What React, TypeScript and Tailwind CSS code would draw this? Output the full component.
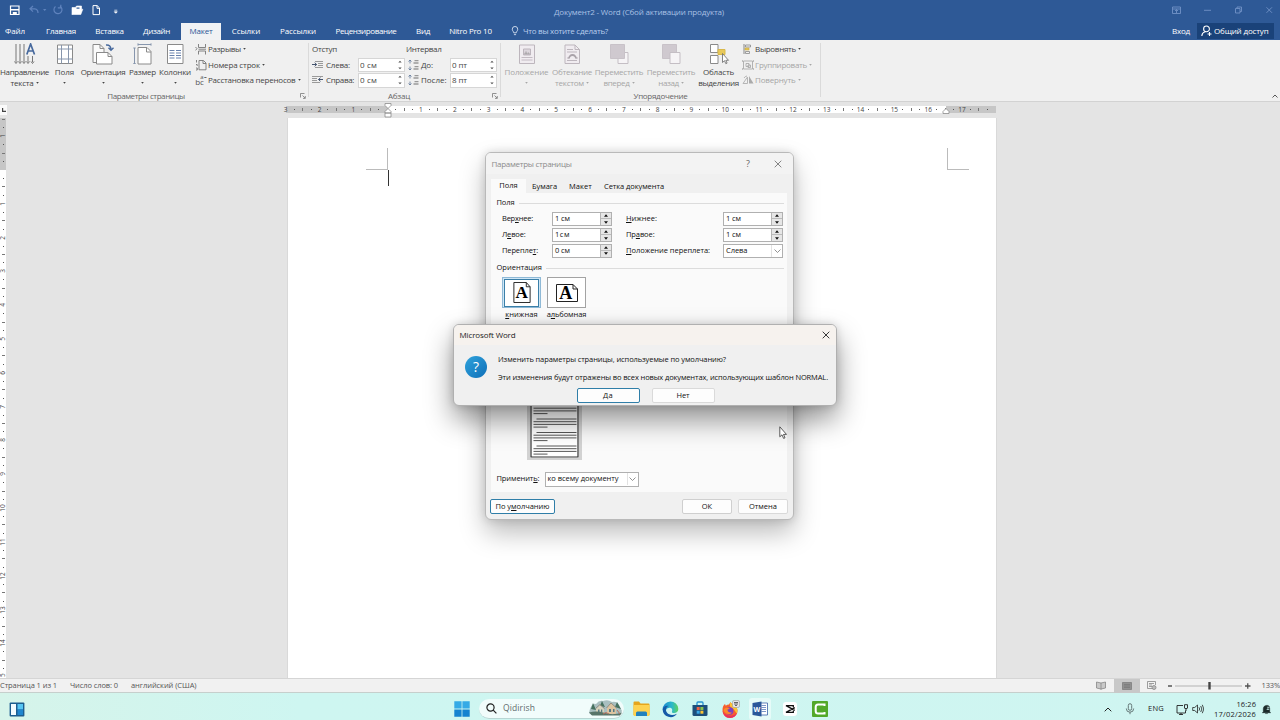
import { useLayoutEffect, useRef, useState } from "react";
import type { ReactNode } from "react";

/* Single-line label whose letter spacing is adjusted to fill a given width. */
function Fit({ w, children, className = "" }: { w: number; children: ReactNode; className?: string }) {
  const ref = useRef<HTMLSpanElement>(null);
  const [spacing, setSpacing] = useState(0);
  useLayoutEffect(() => {
    const el = ref.current;
    if (!el) return;
    el.style.letterSpacing = "0px";
    const n = (el.textContent ?? "").length || 1;
    const s = (w - el.getBoundingClientRect().width) / n;
    el.style.letterSpacing = `${s}px`;
    setSpacing(s);
  }, [w]);
  return (
    <span ref={ref} className={`inline-block shrink-0 whitespace-nowrap ${className}`} style={{ letterSpacing: `${spacing}px` }}>
      {children}
    </span>
  );
}

function Caret({ className = "" }: { className?: string }) {
  return (
    <svg viewBox="0 0 4 3" className={`h-[2px] w-[3px] shrink-0 fill-current ${className}`}>
      <path d="M0 0h4L2 2.6z" />
    </svg>
  );
}

function Launcher() {
  return (
    <svg viewBox="0 0 6 6" className="h-[6px] w-[6px] fill-none stroke-[#777]" strokeWidth=".8">
      <path d="M.5 4.5v-4h4M2.5 2.5l2.6 2.6M5.3 3v2.4H3" />
    </svg>
  );
}

/* ---------- title bar and tabs ---------- */

function TitleBar() {
  return (
    <div className="flex h-[23px] items-center text-[#dbe6f6]">
      <svg viewBox="0 0 120 23" className="h-[23px] w-[120px] shrink-0 fill-none">
        <path d="M10.500 6h8.500v8.500h-8.500z" stroke="#fff" strokeWidth="1.200" />
        <path d="M10.500 9h8.500v1.600h-8.500zM12.800 12h4v2.500h-4z" fill="#fff" />
        <g stroke="#5f83bd" strokeWidth="1.200">
          <path d="M33 6l-3 2.800 3 2.800M30.300 8.800h4.500q3.200.4 3.200 4.200" />
          <path d="M55.500 6.500a4 4 0 1 0 4.500-.3M60.800 4.800v3h-3" />
        </g>
        <path d="M43 9h3.400l-1.700 2z" fill="#5f83bd" />
        <path d="M72 14.500v-7h3.500l1-1.500h5v3M72 14.500l2.300-5.300h8.500l-2 5.300z" fill="#fff" stroke="#fff" strokeWidth=".6" />
        <path d="M76.500 7.500h3v1.200h-3z" fill="#2b5797" />
        <path d="M93 5.600h4.200l2.300 2.300v6.700H93zM97 5.800v2.500h2.500" stroke="#fff" strokeWidth="1" />
        <path d="M114.300 10.200h3M114.300 11.800h3l-1.500 1.500z" stroke="#fff" strokeWidth=".7" fill="#fff" />
      </svg>
      <div className="ml-[434px] text-[8px] text-[#a9c0e4]">
        <Fit w={170}>Документ2 - Word (Сбой активации продукта)</Fit>
      </div>
      <svg viewBox="0 0 120 23" className="ml-auto h-[23px] w-[120px] shrink-0 fill-none stroke-[#7292c6]" strokeWidth=".9">
        <path d="M12.500 7h8v6.500h-8zM12.500 9h8M16.500 13V9.500M15 11l1.500-1.500L18 11" />
        <path d="M44 10.300h7M75.500 8.500h4.500v4.500h-4.500zM77 8.500V7h4.500v4.500H80M106.500 7.300l5.500 5.500M112 7.300l-5.500 5.500" />
      </svg>
    </div>
  );
}

const tabs: { t: string; w: number; cls: string }[] = [
  { t: "Файл", w: 20, cls: "w-[30px]" },
  { t: "Главная", w: 30, cls: "ml-[7px] w-[48px]" },
  { t: "Вставка", w: 28.5, cls: "w-[49px]" },
  { t: "Дизайн", w: 27, cls: "w-[45px]" },
  { t: "Макет", w: 23, cls: "ml-[2px] w-[40px] bg-[#f0f2f4] text-[#2b5797]" },
  { t: "Ссылки", w: 28.5, cls: "ml-[2px] w-[46px]" },
  { t: "Рассылки", w: 36, cls: "w-[58px]" },
  { t: "Рецензирование", w: 61, cls: "w-[78px]" },
  { t: "Вид", w: 14, cls: "w-[36px]" },
  { t: "Nitro Pro 10", w: 42.5, cls: "w-[59px]" },
];

function TabRow() {
  return (
    <div className="flex h-[17px] text-[8px] leading-[16px] text-white">
      {tabs.map((t) => (
        <div key={t.t} className={`flex shrink-0 justify-center ${t.cls}`}>
          <Fit w={t.w}>{t.t}</Fit>
        </div>
      ))}
      <div className="ml-[11px] flex h-[16px] items-center text-[#b9cdec]">
        <svg viewBox="0 0 8 11" className="h-[10px] w-[8px] fill-none stroke-[#e4edf9]" strokeWidth=".9">
          <path d="M2.600 7.500c0-1.500-1.600-2-1.600-4a3 3 0 0 1 6 0c0 2-1.600 2.500-1.600 4zM2.800 9.500h2.400" />
        </svg>
        <Fit w={85} className="ml-[4px]">Что вы хотите сделать?</Fit>
      </div>
      <div className="mr-[6px] ml-auto flex">
        <Fit w={18} className="mr-[7px]">Вход</Fit>
        <div className="flex h-[16px] w-[77px] items-center bg-[#1a4279]">
          <svg viewBox="0 0 12 12" className="ml-[4px] h-[12px] w-[12px] fill-none stroke-white" strokeWidth="1.100">
            <path d="M5.500 1a2.900 2.900 0 1 1 0 5.800 2.900 2.900 0 0 1 0-5.800zM.8 11c.2-2.600 1.500-3.800 3.200-4.300M6.500 9h4M8.500 7v4" />
          </svg>
          <Fit w={54.5} className="ml-[1px]">Общий доступ</Fit>
        </div>
      </div>
    </div>
  );
}

/* ---------- ribbon ---------- */

function BigButton({ cls, icon, l1, w1, l2, w2 = 0, caret = true }: { cls: string; icon: ReactNode; l1: string; w1: number; l2?: string; w2?: number; caret?: boolean }) {
  return (
    <div className={`flex shrink-0 flex-col items-center pt-[3px] ${cls}`}>
      <svg viewBox="0 0 22 22" className="h-[22px] w-[22px] shrink-0 fill-none">{icon}</svg>
      <div className="mt-[1px] flex h-[12px] justify-center leading-[12px]">
        <Fit w={w1}>{l1}</Fit>
      </div>
      <div className="flex h-[10px] items-center justify-center leading-[10px]">
        {l2 && <Fit w={w2}>{l2}</Fit>}
        {caret && <Caret className={l2 ? "ml-[2px]" : ""} />}
      </div>
    </div>
  );
}

function SmallButton({ icon, t, w, cls = "", caret = true }: { icon: ReactNode; t: string; w: number; cls?: string; caret?: boolean }) {
  return (
    <div className={`flex h-[15.500px] items-center ${cls}`}>
      <svg viewBox="0 0 12 12" className="mr-[1px] h-[12px] w-[12px] shrink-0 fill-none">{icon}</svg>
      <Fit w={w}>{t}</Fit>
      {caret && <Caret className="ml-[2px]" />}
    </div>
  );
}

function RibbonSpin({ v, w }: { v: string; w: number }) {
  return (
    <div className="flex h-[14.500px] w-[47px] shrink-0 items-center justify-between border border-[#d6d6d6] bg-white pr-[2px] pl-[1px]">
      <Fit w={w}>{v}</Fit>
      <svg viewBox="0 0 4 10" className="h-[10px] w-[4px] fill-[#555]">
        <path d="M.3 2.500L2 .8l1.700 1.700zM.3 7.500h3.400L2 9.200z" />
      </svg>
    </div>
  );
}

function IndentIcon({ right = false }: { right?: boolean }) {
  return (
    <svg viewBox="0 0 12 10" className="h-[10px] w-[12px] shrink-0 fill-none stroke-[#9a9a9a]" strokeWidth="1">
      {right ? <path d="M0 1.500h11M0 3.500h5M0 5.500h5M0 7.500h8" /> : <path d="M3 1.500h8M6 3.500h5M6 5.500h5M3 7.500h8" />}
      {right ? <path d="M11 4.500H6.500M8.500 2.700l-2 1.800 2 1.800" stroke="#44546f" /> : <path d="M0 4.500h4.500M2.700 2.700l2 1.800-2 1.800" stroke="#44546f" />}
    </svg>
  );
}

function SpacingIcon() {
  return (
    <svg viewBox="0 0 11 12" className="h-[12px] w-[11px] shrink-0 fill-none">
      <path d="M2 1v3.500M.5 2.500L2 1l1.500 1.500M2 7.500V11M.5 9.500L2 11l1.500-1.500" stroke="#5a7397" strokeWidth=".8" />
      <path d="M6.500 1.700h4M5.500 4h5M6.500 7.700h4M5.500 10h5" stroke="#999" strokeWidth="1.300" />
    </svg>
  );
}

function GroupLabel({ t, w, cls, launcher = true }: { t: string; w: number; cls: string; launcher?: boolean }) {
  return (
    <div className="flex h-[11px] items-center text-[#666]">
      <span className={`flex justify-center ${cls}`}><Fit w={w}>{t}</Fit></span>
      {launcher && <span className="ml-auto w-[8px]"><Launcher /></span>}
    </div>
  );
}

function Ribbon() {
  return (
    <div className="flex h-[62px] border-b border-[#d2d2d2] bg-[#f0f0f0] text-[8px] text-[#444]">
      <div className="flex h-[61px] w-[308px] flex-col">
        <div className="flex h-[50px]">
          <BigButton cls="w-[49px]" l1="Направление" w1={49} l2="текста" w2={23} icon={
            <>
              <path d="M2 1v18M6 1v18M10 1v18M14 13v6M18.500 13v6" stroke="#777" strokeWidth="1" />
              <path d="M.5 18.500L2 20.500l1.500-2M4.500 18.500L6 20.500l1.500-2M8.500 18.500l1.500 2 1.500-2M12.500 18.500l1.500 2 1.500-2M17 18.500l1.500 2 1.500-2" stroke="#777" />
              <path d="M12.800 11.500L16.600 1l3.900 10.500M14 8h5.200" stroke="#47699d" strokeWidth="1.700" />
            </>
          } />
          <BigButton cls="w-[31px]" l1="Поля" w1={19.5} icon={
            <>
              <path d="M3.500 2h15v18.500h-15z" fill="#fff" stroke="#8a8a8a" />
              <path d="M7.500 2v18.500M14.500 2v18.500M3.500 6h15M3.500 16h15" stroke="#8796ad" />
            </>
          } />
          <BigButton cls="w-[46px]" l1="Ориентация" w1={44.5} icon={
            <>
              <path d="M1 1.500h7l4 4v14H1z" fill="#fafafa" stroke="#8a8a8a" />
              <path d="M8 1.500v4h4" stroke="#8a8a8a" />
              <path d="M4.500 9.500h11.500l4 4v7.500H4.500z" fill="#fff" stroke="#8a8a8a" />
              <path d="M16 9.500v4h4" stroke="#8a8a8a" />
              <path d="M14 2q5-.5 5 5M16.500 4.800L19 7.300l2.500-2.500" stroke="#47699d" strokeWidth="1.400" />
            </>
          } />
          <BigButton cls="w-[33px]" l1="Размер" w1={27} icon={
            <>
              <path d="M6 4.500h9l4 4v12.500H6z" fill="#fff" stroke="#8a8a8a" />
              <path d="M14.500 4.500v4.500H19" stroke="#8a8a8a" />
              <path d="M6 1.500h13M6 .3v2.400M19 .3v2.400M2.500 5v15.500M1.300 5h2.400M1.300 20.500h2.400" stroke="#8796ad" />
            </>
          } />
          <BigButton cls="w-[32px]" l1="Колонки" w1={32} icon={
            <>
              <path d="M3.500 1.500h15.500v19H3.500z" fill="#fff" stroke="#8a8a8a" />
              <path d="M5.500 7.500h5M12 7.500h5M5.500 10h5M12 10h5M5.500 12.500h5M12 12.500h5M5.500 15h5M12 15h5" stroke="#6680ac" strokeWidth="1" />
            </>
          } />
          <div className="flex flex-col pt-[1.500px] pl-[4px]">
            <SmallButton t="Разрывы" w={33} icon={<path d="M3.500 1v3.500h7V1M3.500 11.500V8h7v3.500M.5 4L2 5.700.5 7.400M3.500 6.200h7.500" stroke="#777" strokeWidth=".9" />} />
            <SmallButton t="Номера строк" w={52} icon={<path d="M4 1.500h4.500L11 4v6.800H4zM8 1.700V4.500h3M1.500 1v2.500M1 5.500h1.200V7M1 9h1.300v2H1" stroke="#777" strokeWidth=".9" />} />
            <SmallButton t="Расстановка переносов" w={87.5} icon={
              <>
                <text x=".2" y="10.500" className="fill-[#555] text-[8px] font-medium">bc</text>
                <text x="5.200" y="4.800" className="fill-[#555] text-[6px] font-medium">a</text>
                <path d="M9.300 3.500h2.200" stroke="#555" strokeWidth=".9" />
              </>
            } />
          </div>
        </div>
        <GroupLabel t="Параметры страницы" w={77.5} cls="w-[292px]" />
      </div>

      <div className="mt-[3px] h-[54px] w-px bg-[#dadada]" />

      <div className="flex h-[61px] w-[191px] flex-col">
        <div className="flex h-[50px] flex-col pt-[1.500px] pl-[3px]">
          <div className="flex h-[15.500px] items-center">
            <span className="w-[94px]"><Fit w={25}>Отступ</Fit></span>
            <Fit w={35.5}>Интервал</Fit>
          </div>
          <div className="flex h-[15.500px] items-center">
            <IndentIcon />
            <span className="ml-[2px] w-[32px]"><Fit w={24}>Слева:</Fit></span>
            <RibbonSpin v="0 см" w={17} />
            <span className="ml-[3px] flex"><SpacingIcon /></span>
            <span className="ml-[2px] w-[29px]"><Fit w={12}>До:</Fit></span>
            <RibbonSpin v="0 пт" w={15} />
          </div>
          <div className="flex h-[15.500px] items-center">
            <IndentIcon right />
            <span className="ml-[2px] w-[32px]"><Fit w={28}>Справа:</Fit></span>
            <RibbonSpin v="0 см" w={17} />
            <span className="ml-[3px] flex"><SpacingIcon /></span>
            <span className="ml-[2px] w-[29px]"><Fit w={25.5}>После:</Fit></span>
            <RibbonSpin v="8 пт" w={15} />
          </div>
        </div>
        <GroupLabel t="Абзац" w={22} cls="w-[180px]" />
      </div>

      <div className="mt-[3px] h-[54px] w-px bg-[#dadada]" />

      <div className="flex h-[61px] w-[319px] flex-col">
        <div className="flex h-[50px] pl-[1px] text-[#a6a6a6]">
          <BigButton cls="w-[49px]" l1="Положение" w1={44} icon={
            <>
              <path d="M3.500 2h15v18.500h-15z" fill="#f0ecf0" stroke="#bdb6bd" />
              <path d="M7.500 6h7v6h-7z" fill="#dcd6dc" stroke="#bdb6bd" />
              <path d="M8 11.500l2-3 1.500 2 1-1 1.500 2zM5.500 14.500h11M5.500 17h11" fill="#aaa" stroke="#bdb6bd" strokeWidth=".9" />
            </>
          } />
          <BigButton cls="w-[42px]" l1="Обтекание" w1={40} l2="текстом" w2={29} icon={
            <>
              <path d="M4 2h10l4.500 4.500v14H4z" fill="#f0ecf0" stroke="#bdb6bd" />
              <path d="M14 2v4.500h4.500M6 6.500h6M6 9h10M6 17.500h10M6 15h2M15 15h2" stroke="#bdb6bd" />
              <path d="M8 15.500a3.500 3.500 0 0 1 7 0" stroke="#a9a2a9" strokeWidth="1.800" />
            </>
          } />
          <BigButton cls="w-[52px]" l1="Переместить" w1={48.5} l2="вперед" w2={26} icon={
            <>
              <path d="M10 9.500h10v11H10z" fill="#f6f4f6" stroke="#c4bec4" />
              <path d="M2.500 1.500h14v14h-14z" fill="#cfc9cf" stroke="#c8c2c8" />
            </>
          } />
          <BigButton cls="w-[52px]" l1="Переместить" w1={48.5} l2="назад" w2={20.5} icon={
            <>
              <path d="M2.500 1.500h14v14h-14z" fill="#cfc9cf" stroke="#c8c2c8" />
              <path d="M10 9.500h10v11H10z" fill="#f6f4f6" stroke="#c4bec4" />
            </>
          } />
          <BigButton cls="w-[43px] text-[#444]" l1="Область" w1={31} l2="выделения" w2={40.5} caret={false} icon={
            <>
              <path d="M2.500 1.500h7.500v8H2.500zM2.500 12.500h7.500v8H2.500z" fill="#fff" stroke="#8a8a8a" />
              <path d="M10 6.500h7v5h-7z" fill="#e8c95a" stroke="#d9b94a" />
              <path d="M14.500 10.500v9l2-1.800 1.300 3 1.300-.6-1.300-2.800h2.700z" fill="#fff" stroke="#666" strokeWidth=".8" />
            </>
          } />
          <div className="flex flex-col pt-[1.500px] pl-[2px]">
            <SmallButton t="Выровнять" w={41} cls="text-[#444]" icon={
              <>
                <path d="M2 1v10" stroke="#888" />
                <path d="M3.500 2h5v2h-5zM3.500 8.500h4v2h-4z" stroke="#888" strokeWidth=".8" />
                <path d="M3 5h4v2H3z" fill="#e8c95a" stroke="#c6a840" strokeWidth=".6" />
              </>
            } />
            <SmallButton t="Группировать" w={52} icon={<path d="M1.500 2h9v8h-9zM4 4.500h3v3H4zM6 6h2.500v2.500H6zM.3 1v2M11.700 1v2M.3 9v2M11.700 9v2" stroke="#aaa" strokeWidth=".9" />} />
            <SmallButton t="Повернуть" w={40.5} icon={<><path d="M1 9.500h4.500V3zM2 4a4 4 0 0 1 3-2" stroke="#b5b5b5" /><path d="M7 2v7.500h4.500z" fill="#aaa" /></>} />
          </div>
        </div>
        <GroupLabel t="Упорядочение" w={54} cls="w-[319px]" launcher={false} />
      </div>

      <div className="mt-[3px] h-[54px] w-px bg-[#dadada]" />
      <svg viewBox="0 0 6 4" className="mt-auto mr-[2px] mb-[3px] ml-auto h-[4px] w-[6px] fill-none stroke-[#555]" strokeWidth="1">
        <path d="M.5 3.500L3 1l2.500 2.500" />
      </svg>
    </div>
  );
}

/* ---------- rulers ---------- */

function HorizontalRuler() {
  return (
    <div className="relative flex h-[16px] items-center pb-[2px]">
      <div className="ml-[281.500px] flex h-[7px] w-[714.500px] items-center overflow-hidden bg-[linear-gradient(90deg,transparent_4px,#c6c6c6_4px,#c6c6c6_106px,#fff_106px,#fff_664px,#c6c6c6_664px)]">
        {Array.from({ length: 84 }, (_, k) => {
          const cm = k / 4 - 3;
          const label = Number.isInteger(cm);
          return (
            <span key={k} className="flex h-[7px] w-[8.467px] shrink-0 items-center justify-center text-[6.500px] leading-[7px] text-[#444]">
              {label ? (cm === 0 ? "" : Math.abs(cm)) : k % 2 === 0 ? <i className="h-[3px] w-px bg-[#777]" /> : <i className="h-px w-px bg-[#555]" />}
            </span>
          );
        })}
      </div>
      <svg viewBox="0 0 8 15" className="absolute top-[1px] left-[384px] h-[15px] w-[8px] fill-white stroke-[#8a8a8a]" strokeWidth=".8">
        <path d="M1 .5h6v2L4 5.500 1 2.500zM4 5.500l3 3v1.500H1V8.500zM1 10h6v4H1z" />
      </svg>
      <svg viewBox="0 0 8 6" className="absolute top-[6px] left-[942px] h-[6px] w-[8px] fill-white stroke-[#8a8a8a]" strokeWidth=".8">
        <path d="M4 .5l3 3V5.500H1v-2z" />
      </svg>
      <div className="absolute top-[3px] left-0 flex h-[10px] w-[7px] items-center justify-center bg-[#fafafa]">
        <svg viewBox="0 0 4 4" className="h-[4px] w-[4px] fill-none stroke-[#444]" strokeWidth="1.200"><path d="M.6 0v3.400H4" /></svg>
      </div>
    </div>
  );
}

function VerticalRuler() {
  return (
    <div className="flex h-[560px] w-[6px] shrink-0 flex-col overflow-hidden bg-[linear-gradient(180deg,#c6c6c6_52px,#fff_52px)]">
      {Array.from({ length: 67 }, (_, k) => {
        const cm = k / 4 - 1.5;
        const label = Number.isInteger(cm);
        return (
          <span key={k} className={`flex h-[8.458px] w-[6px] shrink-0 items-center justify-center text-[6.500px] leading-[6px] text-[#444] ${k === 0 ? "-mt-[3px]" : ""}`}>
            {label ? (cm === 0 ? "" : <b className="-rotate-90 font-medium">{Math.abs(cm)}</b>) : k % 2 === 0 ? <i className="h-px w-[3px] bg-[#777]" /> : <i className="h-px w-px bg-[#555]" />}
          </span>
        );
      })}
    </div>
  );
}

function DocumentArea() {
  return (
    <div className="flex h-[576px] flex-col bg-[#e4e4e4]">
      <HorizontalRuler />
      <div className="flex h-[560px] overflow-hidden">
        <VerticalRuler />
        <div className="ml-[281px] flex h-[560px] w-[710px] flex-col border-x border-[#d9d9d9] bg-white pt-[30px]">
          <div className="flex justify-between pr-[27px] pl-[78px]">
            <div className="h-[22px] w-[22px] border-r border-b border-[#bbb]" />
            <div className="h-[22px] w-[22px] border-b border-l border-[#bbb]" />
          </div>
          <div className="ml-[100px] h-[16px] w-px bg-[#333]" />
        </div>
      </div>
    </div>
  );
}

/* ---------- page setup dialog ---------- */

function Spin({ v }: { v: string }) {
  return (
    <div className="flex h-[14px] w-[60px] shrink-0 items-center justify-between border border-[#b0b0b0] bg-white pl-[2px]">
      <Fit w={15}>{v}</Fit>
      <div className="flex h-[12px] w-[11px] flex-col border-l border-[#b5b5b5] bg-[#e6e6e6]">
        <span className="flex h-[6px] items-center justify-center border-b border-[#bbb]">
          <svg viewBox="0 0 6 4" className="h-[3px] w-[4px] fill-[#111]"><path d="M0 4L3 0l3 4z" /></svg>
        </span>
        <span className="flex h-[6px] items-center justify-center">
          <svg viewBox="0 0 6 4" className="h-[3px] w-[4px] fill-[#111]"><path d="M0 0h6L3 4z" /></svg>
        </span>
      </div>
    </div>
  );
}

function Select({ children, cls }: { children: ReactNode; cls: string }) {
  return (
    <div className={`flex shrink-0 items-center justify-between border border-[#b0b0b0] bg-white pl-[2px] ${cls}`}>
      {children}
      <span className="flex h-[12px] w-[11px] items-center justify-center border-l border-[#e2e2e2]">
        <svg viewBox="0 0 7 4" className="h-[4px] w-[7px] fill-none stroke-[#777]" strokeWidth=".8"><path d="M.5.5l3 3 3-3" /></svg>
      </span>
    </div>
  );
}

function Section({ t, w }: { t: string; w: number }) {
  return (
    <div className="mr-[3px] ml-[5.500px] flex h-[12px] shrink-0 items-center">
      <Fit w={w}>{t}</Fit>
      <span className="ml-[4px] h-px flex-1 bg-[#dcdcdc]" />
    </div>
  );
}

function DialogButton({ children, cls }: { children: ReactNode; cls: string }) {
  return <div className={`flex shrink-0 items-center justify-center rounded-[2px] border bg-[#fdfdfd] ${cls}`}>{children}</div>;
}

const paragraphs = [0, 1, 2, 3];

function PageSetup() {
  return (
    <div className="absolute top-[152px] left-[485px] flex h-[368px] w-[309px] flex-col rounded-[6px] border border-[#b9b9b9] bg-[#f0f0f0] text-[7.500px] text-[#111] shadow-[0_13px_26px_rgba(0,0,0,0.26),0_0_10px_rgba(0,0,0,0.14)]">
      <div className="flex h-[21px] items-center rounded-t-[5px] bg-[#f3f3f3] pl-[5.500px] text-[8px] text-[#8b8b8b]">
        <Fit w={80}>Параметры страницы</Fit>
        <span className="mr-[24px] ml-auto text-[9px] text-[#666]">?</span>
        <svg viewBox="0 0 8 8" className="mr-[11px] h-[8px] w-[8px] stroke-[#777]" strokeWidth=".9"><path d="M.7.7l6.600 6.600M7.300.7L.7 7.300" /></svg>
      </div>
      <div className="mt-[5px] ml-[5px] flex h-[14px] items-center">
        <span className="flex h-[14px] w-[35px] items-center justify-center bg-[#fafafa]"><Fit w={18.5}>Поля</Fit></span>
        <span className="flex h-[14px] items-center pt-[1px]">
          <Fit w={25} className="ml-[6px]">Бумага</Fit>
          <Fit w={23} className="ml-[12px]">Макет</Fit>
          <Fit w={60} className="ml-[12px]">Сетка документа</Fit>
        </span>
      </div>
      <div className="mr-[6px] ml-[5px] flex h-[299px] shrink-0 flex-col bg-[#fafafa] pt-[4px]">
        <Section t="Поля" w={18} />
        <div className="mt-[3px] ml-[11px] flex h-[14px] shrink-0 items-center">
          <span className="w-[50px]"><Fit w={31}>Вер<u>х</u>нее:</Fit></span>
          <Spin v="1 см" />
          <span className="ml-[14px] w-[97px]"><Fit w={31}><u>Н</u>ижнее:</Fit></span>
          <Spin v="1 см" />
        </div>
        <div className="mt-[2px] ml-[11px] flex h-[14px] shrink-0 items-center">
          <span className="w-[50px]"><Fit w={23.5}>Л<u>е</u>вое:</Fit></span>
          <Spin v="1см" />
          <span className="ml-[14px] w-[97px]"><Fit w={28.5}>Пр<u>а</u>вое:</Fit></span>
          <Spin v="1 см" />
        </div>
        <div className="mt-[1px] ml-[11px] flex h-[15px] shrink-0 items-center">
          <span className="w-[50px]"><Fit w={36}>Перепле<u>т</u>:</Fit></span>
          <Spin v="0 см" />
          <span className="ml-[14px] w-[97px]"><Fit w={84}><u>П</u>оложение переплета:</Fit></span>
          <Select cls="h-[14px] w-[60px]"><Fit w={21.5}>Слева</Fit></Select>
        </div>
        <div className="h-[4px] shrink-0" />
        <Section t="Ориентация" w={45.5} />
        <div className="mt-[3px] ml-[11px] flex gap-[6px]">
          <div className="flex w-[39px] flex-col items-center">
            <div className="flex h-[31px] w-[39px] shrink-0 items-center justify-center border border-[#8fb9d6] bg-[#cfe6f5]">
              <div className="flex h-[28px] w-[35px] items-center justify-center border border-[#3a7fa8] bg-white">
                <svg viewBox="0 0 18 22" className="h-[21px] w-[18px] fill-white stroke-[#222]" strokeWidth="1">
                  <path d="M.5.500h13l4 4.500v16.500H.5zM13.500.500V5h4" />
                  <text x="8.800" y="17" textAnchor="middle" className="fill-black stroke-none font-['Liberation_Serif',serif] text-[18px] font-bold">A</text>
                </svg>
              </div>
            </div>
            <Fit w={32.500} className="leading-[12px]"><u>к</u>нижная</Fit>
          </div>
          <div className="flex w-[39px] flex-col items-center">
            <div className="flex h-[31px] w-[39px] shrink-0 items-center justify-center border border-[#a3a3a3] bg-white">
              <svg viewBox="0 0 22 18" className="h-[18px] w-[22px] fill-white stroke-[#222]" strokeWidth="1">
                <path d="M.5.500h16.500l4.500 4.500v12.500H.5zM17 .5V5h4.500" />
                <text x="9.800" y="15" textAnchor="middle" className="fill-black stroke-none font-['Liberation_Serif',serif] text-[18px] font-bold">A</text>
              </svg>
            </div>
            <Fit w={39.500} className="leading-[12px]">а<u>л</u>ьбомная</Fit>
          </div>
        </div>
        <div className="mt-auto ml-[35.500px] h-[76px] w-[55px] shrink-0 border-x-[3px] border-b-[2px] border-[#d2d2d2]">
          <svg viewBox="0 0 49 74" className="h-[74px] w-[49px]">
            <path d="M1 0h47v73H1z" fill="#fff" stroke="#333" strokeWidth="1.200" />
            {paragraphs.map((p) => (
              <path key={p} d={`M6.500 ${21.500 + p * 13.500}h40M3.500 ${24.200 + p * 13.500}h43M3.500 ${26.900 + p * 13.500}h43M3.500 ${29.600 + p * 13.500}h14`} stroke="#444" strokeWidth=".9" />
            ))}
          </svg>
        </div>
        <div className="mt-[11.500px] mb-[5.500px] ml-[5.500px] flex h-[15px] shrink-0 items-center">
          <span className="w-[48px]"><Fit w={43}>Применит<u>ь</u>:</Fit></span>
          <Select cls="h-[15px] w-[94px]"><Fit w={71}>ко всему документу</Fit></Select>
        </div>
      </div>
      <div className="mt-[7px] ml-[4px] flex">
        <DialogButton cls="h-[15px] w-[65px] border-[#2f7ea8]"><Fit w={54}>По у<u>м</u>олчанию</Fit></DialogButton>
        <DialogButton cls="ml-[127px] h-[15px] w-[50px] border-[#cfcfcf]"><Fit w={10.500}>ОК</Fit></DialogButton>
        <DialogButton cls="ml-[6px] h-[15px] w-[50px] border-[#d9d9d9]"><Fit w={28}>Отмена</Fit></DialogButton>
      </div>
    </div>
  );
}

/* ---------- confirmation message ---------- */

function Confirm() {
  return (
    <div className="absolute top-[324px] left-[453px] flex h-[82px] w-[384px] flex-col rounded-[6px] border border-[#b0b0b0] bg-[#f0f0f0] text-[7.500px] text-[#111] shadow-[0_14px_28px_rgba(0,0,0,0.42),0_0_8px_rgba(0,0,0,0.15)]">
      <div className="flex h-[20px] items-center rounded-t-[5px] bg-[#f6f2ee] pl-[5.500px] text-[8px] text-[#222]">
        <Fit w={56}>Microsoft Word</Fit>
        <svg viewBox="0 0 8 8" className="mr-[6px] ml-auto h-[8px] w-[8px] stroke-[#222]" strokeWidth=".9"><path d="M.7.7l6.600 6.600M7.300.7L.7 7.300" /></svg>
      </div>
      <div className="flex">
        <div className="mt-[11px] ml-[11px] flex h-[22px] w-[22px] items-center justify-center rounded-full bg-gradient-to-br from-[#2fa3dc] to-[#0f6fb8] text-[14px] leading-[22px] text-white">?</div>
        <div className="ml-[11px] flex flex-col items-start pt-[7.500px]">
          <Fit w={228} className="leading-[12px]">Изменить параметры страницы, используемые по умолчанию?</Fit>
          <Fit w={330} className="mt-[6px] leading-[12px]">Эти изменения будут отражены во всех новых документах, использующих шаблон NORMAL.</Fit>
        </div>
      </div>
      <div className="mt-[5.500px] ml-[122.500px] flex gap-[12px]">
        <DialogButton cls="h-[15px] w-[63px] border-[#2f7ea8]"><Fit w={10}>Да</Fit></DialogButton>
        <DialogButton cls="h-[15px] w-[63px] border-[#dadada]"><Fit w={13}>Нет</Fit></DialogButton>
      </div>
    </div>
  );
}

/* ---------- status bar and taskbar ---------- */

function StatusBar() {
  return (
    <div className="flex h-[15px] items-center border-t border-b border-t-[#d5d5d5] border-b-[#c6cfcc] bg-[#f1f1f1] text-[7.500px] text-[#555]">
      <Fit w={57}>Страница 1 из 1</Fit>
      <Fit w={48} className="ml-[13px]">Число слов: 0</Fit>
      <Fit w={65.5} className="ml-[13px]">английский (США)</Fit>
      <div className="ml-auto flex h-[13px] items-center">
        <svg viewBox="0 0 10 9" className="h-[9px] w-[10px] fill-[#c9c9c9] stroke-[#888]" strokeWidth=".8"><path d="M.5 1L5 2l4.500-1v6L5 8 .5 7zM5 2v6.800" /></svg>
        <span className="ml-[8px] flex h-[14px] w-[26px] items-center justify-center bg-[#c8c8c8]">
          <svg viewBox="0 0 10 8" className="h-[8px] w-[10px] fill-[#909090] stroke-[#777]" strokeWidth=".7"><path d="M.5.500h9v7h-9zM2 2.500h6M2 4h6M2 5.500h6" /></svg>
        </span>
        <svg viewBox="0 0 10 9" className="ml-[7px] h-[9px] w-[10px] fill-none stroke-[#888]" strokeWidth=".8"><path d="M6 7.500H.5v-7h8V4M2 2.500h5M2 4h3M2 5.500h3" /><circle cx="7" cy="6.500" r="2" fill="#bbb" /></svg>
        <svg viewBox="0 0 84 10" className="ml-[10px] h-[10px] w-[84px] fill-none">
          <path d="M1 5h4M78 5h5.500M80.750 2.300v5.400" stroke="#555" strokeWidth="1.300" />
          <path d="M8 5h67" stroke="#a5a5a5" strokeWidth=".8" />
          <path d="M42.500 1v7.500" stroke="#444" strokeWidth="2.400" />
        </svg>
        <Fit w={18.5} className="ml-[11px]">133%</Fit>
      </div>
    </div>
  );
}

function Taskbar() {
  return (
    <div className="flex h-[27px] items-center overflow-hidden bg-[linear-gradient(90deg,#d6f4ea,#cef6f1_300px,#cff5f1)] pt-[5px]">
      <svg viewBox="0 0 16 15" className="ml-[9px] h-[15px] w-[16px]">
        <rect x=".6" y=".6" width="14.800" height="13.800" rx="1" fill="#1c5d8f" />
        <path d="M2 2h5v11H2z" fill="#f2fbff" />
        <path d="M8.500 2H14v5.500H8.500z" fill="#57c5f2" />
        <path d="M8.500 7.500H14V13H8.500z" fill="#1f86cf" />
      </svg>
      <svg viewBox="0 0 16 16" className="ml-[429px] h-[16px] w-[16px]">
        <path d="M.3.300h7.300v7.300H.3zM8.400.300h7.300v7.300H8.400z" fill="#35aae6" />
        <path d="M.3 8.400h7.300v7.300H.3zM8.400 8.400h7.300v7.300H8.400z" fill="#1583d0" />
      </svg>
      <div className="ml-[9px] flex h-[20px] w-[145px] items-center rounded-full border-b border-[#b9d6d4] bg-[#f1fcfb] text-[8.500px] text-[#5f6b6b]">
        <svg viewBox="0 0 11 11" className="ml-[7px] h-[11px] w-[11px] fill-none stroke-[#222]" strokeWidth="1.200"><circle cx="4.500" cy="4.500" r="3.600" /><path d="M7.200 7.200l3.200 3.200" /></svg>
        <Fit w={32} className="ml-[6px] font-normal">Qidirish</Fit>
        <svg viewBox="0 0 34 17" className="mr-[1px] ml-auto h-[17px] w-[34px]">
          <path d="M1 9q2-6 6-5 3-4 7-3 5-2 9 1 6-1 8 5l2 4-2 4H3L0 13z" fill="#a9bfc0" />
          <path d="M2 9l2-6 3 7zM11 6l2-5 3 6zM26 7l2-5 4 7z" fill="#46715f" />
          <path d="M7 9l4-4 4 4v5H7z" fill="#d9d2ba" />
          <path d="M18 8l4-5 5 5v6h-9z" fill="#dcc3a0" />
          <path d="M6.500 8.500L11 4.500l4.500 4M17.500 8L22 3l5.500 5" fill="none" stroke="#8d8275" strokeWidth=".8" />
          <path d="M9 9.500h1.500V12H9zM12 9.500h1.300V12H12zM20 9h2v3h-2zM24 9h1.500v3H24z" fill="#557985" />
          <path d="M0 12.500q8-2 16 .5t17-.5l-2 3H3z" fill="#587469" />
          <path d="M14 14q3-3 6 0M28 10l3 4" stroke="#b8705f" fill="none" />
        </svg>
      </div>
      <svg viewBox="0 0 17 16" className="ml-[9px] h-[16px] w-[17px]">
        <path d="M.5 1.500q0-1 1-1h4.500l1.500 2h8q1 0 1 1V14H.5z" fill="#e5a51d" />
        <path d="M.5 4h16v10q0 1-1 1h-14q-1 0-1-1z" fill="#fdd250" />
        <path d="M3 15v-3q0-1.500 1.500-1.500h8q1.500 0 1.500 1.500v3z" fill="#2181bd" />
      </svg>
      <svg viewBox="0 0 18 18" className="ml-[12px] h-[17px] w-[17px]">
        <defs>
          <linearGradient id="edge" x1="0" x2="1"><stop offset="0" stopColor="#1c88d2" /><stop offset=".6" stopColor="#2cb9c9" /><stop offset="1" stopColor="#60d35a" /></linearGradient>
        </defs>
        <path d="M.7 9A8.300 8.300 0 0 1 17.300 8.500c0 3-2.300 4.200-4.400 4.200-2.300 0-2.700-.9-2.300-1.700.7-1.400.2-3.900-2.600-3.900-3.500 0-4.500 3-3.500 5.500z" fill="url(#edge)" />
        <path d="M.7 9c0-2 2.800-4.500 6.300-3.700-3.200 1-3.700 4.700-1.600 7.200 2.200 2.600 6.200 3 10.400 1A8.300 8.300 0 0 1 .7 9z" fill="#155aa8" />
      </svg>
      <svg viewBox="0 0 16 16" className="ml-[13px] h-[16px] w-[16px]">
        <path d="M5 4V2q0-1 1-1h4q1 0 1 1v2" fill="none" stroke="#2792d0" strokeWidth="1.300" />
        <path d="M.5 4h15v9.500q0 1.500-1.500 1.500H2Q.5 15 .5 13.500z" fill="#1d4e7b" />
        <path d="M4.700 6h3v3h-3z" fill="#ef6245" /><path d="M8.400 6h3v3h-3z" fill="#8bc34a" />
        <path d="M4.700 9.700h3v3h-3z" fill="#38a6e6" /><path d="M8.400 9.700h3v3h-3z" fill="#fcc334" />
      </svg>
      <svg viewBox="0 0 20 19" className="ml-[13px] h-[19px] w-[20px]">
        <path d="M1.500 10c0-3 1-5 2.500-6l.8 1.800Q6 4.500 8 4.500 9 2.500 9.500 2c.5 2 4 3 6 5.500 2.500 3.500.5 10.500-6.500 10.500-4.500 0-7.500-3.500-7.500-8z" fill="#f65f2e" />
        <path d="M9.500 2c.5 2 4 3 6 5.500 1 1.600 1.100 4 0 6-1-2-3-5-6-6.500-1-1.500-.8-3.500 0-5z" fill="#fdc32e" />
        <path d="M1.600 11q1 6.500 7.500 7 5-.2 6.800-5-3 3.500-8 2.500t-6.300-4.500z" fill="#ea2f62" />
        <circle cx="8.700" cy="11" r="3.700" fill="#7b3fc4" />
        <path d="M3 9q3-2.500 6-.3l-2.500.8q0 3.500 4.500 3-2 3-5.500 1T3 9z" fill="#fb8a2a" />
        <rect x="11.500" y=".5" width="7" height="7" rx="1.500" fill="#e5e5e5" stroke="#999" strokeWidth=".6" />
        <path d="M13 2.500h4M13 4h4M14 5.500h2" stroke="#444" strokeWidth=".8" />
      </svg>
      <div className="ml-[8px] flex h-[22px] w-[22px] items-center justify-center rounded-[3px] bg-[#e6fbf8]">
        <svg viewBox="0 0 16 16" className="h-[16px] w-[16px]">
          <path d="M8 2h7.500v12H8z" fill="#fff" stroke="#3b62a7" strokeWidth=".8" />
          <path d="M9.500 4.500h4.500M9.500 6.500h4.500M9.500 8.500h4.500M9.500 10.500h4.500" stroke="#5a7cba" strokeWidth=".8" />
          <path d="M.5 2L9.500.500v15L.5 14z" fill="#2b579a" />
          <text x="5" y="10.500" textAnchor="middle" className="fill-white font-['Open_Sans',sans-serif] text-[7px] font-bold">W</text>
        </svg>
      </div>
      <svg viewBox="0 0 14 14" className="ml-[12px] h-[14px] w-[14px]">
        <rect width="14" height="14" rx="3" fill="#fff" />
        <path d="M11.800 5.600L9.500 6.900 3 10.300h7.300V8.800M11.800 8.400L9.500 7.100 3 3.700h7.300v1.500" fill="none" stroke="#111" strokeWidth="1.300" />
      </svg>
      <svg viewBox="0 0 16 16" className="ml-[15px] h-[16px] w-[16px]">
        <rect width="16" height="16" rx="1" fill="#53a82a" />
        <path d="M12.500 5V3.500H6Q3.700 3.500 3.700 6v4q0 2.500 2.300 2.500h6.500V11" fill="none" stroke="#fff" strokeWidth="2" />
      </svg>
      <div className="ml-auto flex h-[22px] items-center text-[7.500px] text-[#222]">
        <svg viewBox="0 0 8 5" className="h-[5px] w-[8px] fill-none stroke-[#222]" strokeWidth="1"><path d="M.7 4.300L4 1l3.300 3.300" /></svg>
        <svg viewBox="0 0 10 12" className="ml-[13px] h-[12px] w-[10px] fill-none stroke-[#5a6b6b]" strokeWidth=".9"><rect x="3.300" y=".7" width="3.400" height="6.600" rx="1.700" /><path d="M1.300 5.500q0 3.700 3.700 3.700t3.700-3.700M5 9.200v2" /></svg>
        <Fit w={16} className="ml-[13px]">ENG</Fit>
        <svg viewBox="0 0 12 11" className="ml-[12px] h-[11px] w-[12px] fill-none stroke-[#222]" strokeWidth=".9"><path d="M7 1.500H1v7.500h8.500V6.500M3 10.500h4M5 9v1.500M8.500.700h3v3.500q-1.500 1-3 0zM10 4.700V7" /></svg>
        <svg viewBox="0 0 12 10" className="ml-[4px] h-[10px] w-[12px] fill-none stroke-[#222]" strokeWidth=".8"><path d="M.7 3.500h2L5.500 1v8L2.700 6.500h-2zM7 3.300q1.300 1.700 0 3.400M8.700 2q2.300 3 0 6M10.300.8q3 4.200 0 8.400" /></svg>
        <div className="ml-[9px] flex w-[43px] flex-col items-end leading-[10.500px]">
          <Fit w={19.5}>16:26</Fit>
          <Fit w={42}>17/02/2026</Fit>
        </div>
        <svg viewBox="0 0 10 11" className="mr-[9px] ml-[6px] h-[11px] w-[9px]"><path d="M1.500 8V4.500q0-3 3.500-3.500t3.500 3.500V8l1 1H.5zM3.500 10h3" fill="#1c2b2b" stroke="#1c2b2b" strokeWidth=".7" /><path d="M5.500 3h2.500l-2.500 2.500H8" stroke="#cff5f1" strokeWidth=".8" fill="none" /></svg>
      </div>
    </div>
  );
}

export default function App() {
  return (
    <div className="relative flex h-[720px] w-[1280px] flex-col overflow-hidden bg-[#e4e4e4] font-['Open_Sans','Noto_Sans',sans-serif] font-medium">
      <div className="flex h-[40px] flex-col bg-[#2e5996]">
        <TitleBar />
        <TabRow />
      </div>
      <Ribbon />
      <DocumentArea />
      <StatusBar />
      <Taskbar />
      <PageSetup />
      <Confirm />
      <svg viewBox="0 0 8 13" className="absolute top-[426px] left-[779px] h-[13px] w-[8px] fill-white stroke-[#333]" strokeWidth=".8">
        <path d="M.8.800v10l2.200-2 1.600 3.600 1.400-.6-1.500-3.400h3z" />
      </svg>
    </div>
  );
}
